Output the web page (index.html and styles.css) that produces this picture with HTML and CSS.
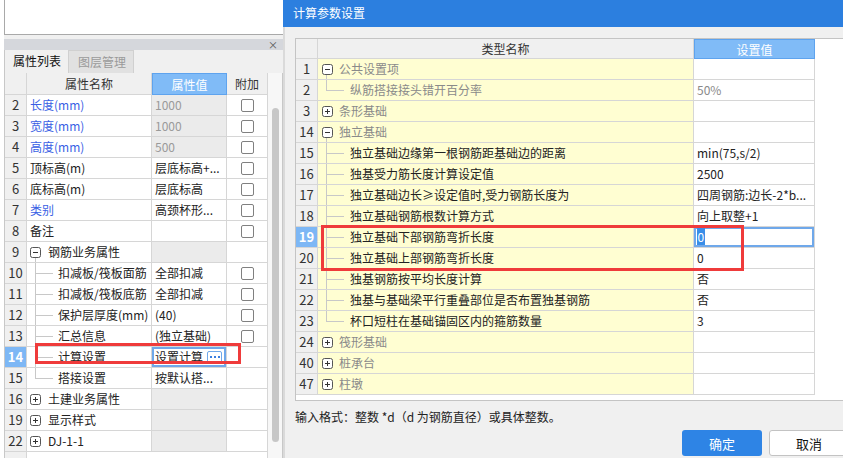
FILE: index.html
```html
<!DOCTYPE html>
<html lang="zh">
<head>
<meta charset="utf-8">
<title>计算参数设置</title>
<link rel="stylesheet" href="styles.css">
</head>
<body>
<div class="left">
  <div class="blank"></div>
  <div class="gap"></div>
  <div class="pbar"><span class="x">×</span></div>
  <div class="tabs"><div class="tab on">属性列表</div><div class="tab off">图层管理</div></div>
  <div class="pbody">
    <div class="ptable">
      <div class="prow head"><div class="c n"></div><div class="c nm h">属性名称</div><div class="c v hv">属性值</div><div class="c a h">附加</div></div>
      <div class="prow"><div class="c n">2</div><div class="c nm blue">长度(mm)</div><div class="c v ro">1000</div><div class="c a"><i class="cb"></i></div></div>
      <div class="prow"><div class="c n">3</div><div class="c nm blue">宽度(mm)</div><div class="c v ro">1000</div><div class="c a"><i class="cb"></i></div></div>
      <div class="prow"><div class="c n">4</div><div class="c nm blue">高度(mm)</div><div class="c v ro">500</div><div class="c a"><i class="cb"></i></div></div>
      <div class="prow"><div class="c n">5</div><div class="c nm">顶标高(m)</div><div class="c v">层底标高+...</div><div class="c a"><i class="cb"></i></div></div>
      <div class="prow"><div class="c n">6</div><div class="c nm">底标高(m)</div><div class="c v">层底标高</div><div class="c a"><i class="cb"></i></div></div>
      <div class="prow"><div class="c n">7</div><div class="c nm blue">类别</div><div class="c v">高颈杯形...</div><div class="c a"><i class="cb"></i></div></div>
      <div class="prow"><div class="c n">8</div><div class="c nm">备注</div><div class="c v"></div><div class="c a"><i class="cb"></i></div></div>
      <div class="prow"><div class="c n">9</div><div class="c nm par open"><svg class="tbox" width="11" height="11" viewBox="0 0 11 11"><rect x="0.5" y="0.5" width="10" height="10" rx="2" fill="#fff" stroke="#555"/><path d="M3 5.5h5" stroke="#333"/></svg>钢筋业务属性</div><div class="c v gr"></div><div class="c a"></div></div>
      <div class="prow"><div class="c n">10</div><div class="c nm ch">扣减板/筏板面筋</div><div class="c v">全部扣减</div><div class="c a"><i class="cb"></i></div></div>
      <div class="prow"><div class="c n">11</div><div class="c nm ch">扣减板/筏板底筋</div><div class="c v">全部扣减</div><div class="c a"><i class="cb"></i></div></div>
      <div class="prow"><div class="c n">12</div><div class="c nm ch">保护层厚度(mm)</div><div class="c v">(40)</div><div class="c a"><i class="cb"></i></div></div>
      <div class="prow"><div class="c n">13</div><div class="c nm ch">汇总信息</div><div class="c v">(独立基础)</div><div class="c a"><i class="cb"></i></div></div>
      <div class="prow"><div class="c n sel">14</div><div class="c nm ch">计算设置</div><div class="c v edit">设置计算<span class="more"><svg width="12" height="4" viewBox="0 0 12 4"><rect x="1" y="1" width="2" height="2" fill="#3b7fe0"/><rect x="5" y="1" width="2" height="2" fill="#3b7fe0"/><rect x="9" y="1" width="2" height="2" fill="#3b7fe0"/></svg></span></div><div class="c a"></div></div>
      <div class="prow"><div class="c n">15</div><div class="c nm ch last">搭接设置</div><div class="c v">按默认搭...</div><div class="c a"></div></div>
      <div class="prow"><div class="c n">16</div><div class="c nm par"><svg class="tbox" width="11" height="11" viewBox="0 0 11 11"><rect x="0.5" y="0.5" width="10" height="10" rx="2" fill="#fff" stroke="#555"/><path d="M3 5.5h5M5.5 3v5" stroke="#333"/></svg>土建业务属性</div><div class="c v gr"></div><div class="c a"></div></div>
      <div class="prow"><div class="c n">19</div><div class="c nm par"><svg class="tbox" width="11" height="11" viewBox="0 0 11 11"><rect x="0.5" y="0.5" width="10" height="10" rx="2" fill="#fff" stroke="#555"/><path d="M3 5.5h5M5.5 3v5" stroke="#333"/></svg>显示样式</div><div class="c v gr"></div><div class="c a"></div></div>
      <div class="prow"><div class="c n">22</div><div class="c nm par"><svg class="tbox" width="11" height="11" viewBox="0 0 11 11"><rect x="0.5" y="0.5" width="10" height="10" rx="2" fill="#fff" stroke="#555"/><path d="M3 5.5h5M5.5 3v5" stroke="#333"/></svg>DJ-1-1</div><div class="c v gr"></div><div class="c a"></div></div>
      <div class="pfill"></div>
    </div>
    <div class="vscroll"><div class="thumb"></div></div>
  </div>
  <div class="redbox lred"></div>
</div>

<div class="dlg">
  <div class="title">计算参数设置</div>
  <div class="dbody">
    <div class="dtable">
      <div class="drow head"><div class="c n"></div><div class="c dn h">类型名称</div><div class="c dv hv">设置值</div><div class="c rest"></div></div>
      <div class="drow"><div class="c n">1</div><div class="c dn par open grp"><svg class="tbox" width="11" height="11" viewBox="0 0 11 11"><rect x="0.5" y="0.5" width="10" height="10" rx="2" fill="#fff" stroke="#555"/><path d="M3 5.5h5" stroke="#333"/></svg>公共设置项</div><div class="c dv"></div><div class="c rest"></div></div>
      <div class="drow"><div class="c n">2</div><div class="c dn ch last grp">纵筋搭接接头错开百分率</div><div class="c dv muted">50%</div><div class="c rest"></div></div>
      <div class="drow"><div class="c n">3</div><div class="c dn par grp"><svg class="tbox" width="11" height="11" viewBox="0 0 11 11"><rect x="0.5" y="0.5" width="10" height="10" rx="2" fill="#fff" stroke="#555"/><path d="M3 5.5h5M5.5 3v5" stroke="#333"/></svg>条形基础</div><div class="c dv"></div><div class="c rest"></div></div>
      <div class="drow"><div class="c n">14</div><div class="c dn par open grp"><svg class="tbox" width="11" height="11" viewBox="0 0 11 11"><rect x="0.5" y="0.5" width="10" height="10" rx="2" fill="#fff" stroke="#555"/><path d="M3 5.5h5" stroke="#333"/></svg>独立基础</div><div class="c dv"></div><div class="c rest"></div></div>
      <div class="drow"><div class="c n">15</div><div class="c dn ch">独立基础边缘第一根钢筋距基础边的距离</div><div class="c dv">min(75,s/2)</div><div class="c rest"></div></div>
      <div class="drow"><div class="c n">16</div><div class="c dn ch">独基受力筋长度计算设定值</div><div class="c dv">2500</div><div class="c rest"></div></div>
      <div class="drow"><div class="c n">17</div><div class="c dn ch">独立基础边长≥设定值时,受力钢筋长度为</div><div class="c dv">四周钢筋:边长-2*b...</div><div class="c rest"></div></div>
      <div class="drow"><div class="c n">18</div><div class="c dn ch">独立基础钢筋根数计算方式</div><div class="c dv">向上取整+1</div><div class="c rest"></div></div>
      <div class="drow"><div class="c n sel">19</div><div class="c dn ch">独立基础下部钢筋弯折长度</div><div class="c dv edit"><span class="hl">0</span></div><div class="c rest"></div></div>
      <div class="drow"><div class="c n">20</div><div class="c dn ch">独立基础上部钢筋弯折长度</div><div class="c dv">0</div><div class="c rest"></div></div>
      <div class="drow"><div class="c n">21</div><div class="c dn ch">独基钢筋按平均长度计算</div><div class="c dv">否</div><div class="c rest"></div></div>
      <div class="drow"><div class="c n">22</div><div class="c dn ch">独基与基础梁平行重叠部位是否布置独基钢筋</div><div class="c dv">否</div><div class="c rest"></div></div>
      <div class="drow"><div class="c n">23</div><div class="c dn ch last">杯口短柱在基础锚固区内的箍筋数量</div><div class="c dv">3</div><div class="c rest"></div></div>
      <div class="drow"><div class="c n">24</div><div class="c dn par grp"><svg class="tbox" width="11" height="11" viewBox="0 0 11 11"><rect x="0.5" y="0.5" width="10" height="10" rx="2" fill="#fff" stroke="#555"/><path d="M3 5.5h5M5.5 3v5" stroke="#333"/></svg>筏形基础</div><div class="c dv"></div><div class="c rest"></div></div>
      <div class="drow"><div class="c n">40</div><div class="c dn par grp"><svg class="tbox" width="11" height="11" viewBox="0 0 11 11"><rect x="0.5" y="0.5" width="10" height="10" rx="2" fill="#fff" stroke="#555"/><path d="M3 5.5h5M5.5 3v5" stroke="#333"/></svg>桩承台</div><div class="c dv"></div><div class="c rest"></div></div>
      <div class="drow"><div class="c n">47</div><div class="c dn par grp"><svg class="tbox" width="11" height="11" viewBox="0 0 11 11"><rect x="0.5" y="0.5" width="10" height="10" rx="2" fill="#fff" stroke="#555"/><path d="M3 5.5h5M5.5 3v5" stroke="#333"/></svg>柱墩</div><div class="c dv"></div><div class="c rest"></div></div>
    </div>
    <div class="hint">输入格式：整数 *d（d 为钢筋直径）或具体整数。</div>
    <div class="btns"><button class="btn ok">确定</button><button class="btn cancel">取消</button></div>
  </div>
  <div class="redbox dred"></div>
</div>
</body>
</html>
```

FILE: styles.css
```css
* { box-sizing: border-box; }
html, body { margin: 0; padding: 0; }
body {
  width: 843px;
  height: 458px;
  overflow: hidden;
  display: flex;
  font-family: "Noto Sans CJK SC", "Noto Sans", sans-serif;
  font-size: 12px;
  color: #222;
  background: #fff;
}

/* ---------- left panel ---------- */
.left {
  width: 283px;
  flex: none;
  position: relative;
  padding-left: 4px;
  background: #fff;
  display: flex;
  flex-direction: column;
}
.blank {
  height: 35px;
  flex: none;
  background: #fff;
  border-left: 1px solid #a9a9a9;
  border-bottom: 1px solid #a9a9a9;
}
.gap { height: 4px; flex: none; background: #f0f0f0; }
.pbar {
  height: 11px;
  flex: none;
  background: #d5d7dc;
  display: flex;
  justify-content: flex-end;
  align-items: center;
  padding-right: 5px;
}
.pbar .x { font-size: 10px; line-height: 10px; color: #555; }
.tabs {
  height: 23px;
  flex: none;
  display: flex;
  background: #f0f0f0;
  border-left: 1px solid #c8c8c8;
}
.tab { line-height: 22px; }
.tab.on { width: 63px; padding-left: 8px; color: #111; }
.tab.off {
  width: 66px;
  padding-left: 9px;
  color: #9a9a9a;
  background: #e1e1e1;
  border: 1px solid #d0d0d0;
  border-bottom: none;
}
.pbody { flex: 1; display: flex; min-height: 0; }
.ptable {
  width: 264px;
  flex: none;
  border-left: 1px solid #c8c8c8;
  display: flex;
  flex-direction: column;
  background: #fff;
}
.prow {
  display: grid;
  grid-template-columns: 22px 125px 75px 41px;
  height: 21px;
  flex: none;
}
.prow.head { height: 22px; }
.c {
  border-right: 1px solid #d6d6d6;
  border-bottom: 1px solid #d6d6d6;
  padding-left: 3px;
  line-height: 20px;
  white-space: nowrap;
  overflow: hidden;
  position: relative;
}
.head .c { line-height: 21px; }
.c.n {
  background: #f0f0f0;
  text-align: center;
  padding-left: 0;
  font-size: 13px;
  color: #333;
}
.c.n.sel { background: #7db7f5; color: #fff; font-weight: bold; }
.c.h { background: #f0f0f0; text-align: center; padding-left: 0; color: #333; }
.c.hv {
  background: #80bbf7;
  color: #fff;
  text-align: center;
  padding-left: 0;
  border: 1px solid #5ea3ee;
}
.blue { color: #3a5fe4; }
.c.v.ro { background: #ebebeb; color: #9a9a9a; }
.c.v.gr { background: #ebebeb; }
.c.a { display: flex; align-items: center; justify-content: center; padding-left: 0; }
.cb {
  width: 13px;
  height: 13px;
  border: 1px solid #808080;
  border-radius: 2px;
  background: #fff;
  display: block;
}
.c.v.edit {
  box-shadow: inset 0 0 0 2px #6fa8ea;
  display: flex;
  align-items: center;
}
.more {
  margin-left: 4px;
  width: 15px;
  height: 13px;
  border: 1px solid #6fa8ea;
  border-radius: 2px;
  background: #fff;
  display: flex;
  align-items: center;
  justify-content: center;
}
.more svg { display: block; }

/* tree */
.tbox { position: absolute; left: 3px; top: 5px; display: block; }
.par { padding-left: 21px; }
.par.open::after {
  content: "";
  position: absolute;
  left: 8px;
  top: 16px;
  bottom: 0;
  width: 1px;
  background: #c8c8c8;
}
.ch { padding-left: 31px; }
.ch::before {
  content: "";
  position: absolute;
  left: 8px;
  top: 0;
  bottom: 0;
  width: 1px;
  background: #c8c8c8;
}
.ch.last::before { bottom: 10px; }
.ch::after {
  content: "";
  position: absolute;
  left: 8px;
  top: 10px;
  width: 18px;
  height: 1px;
  background: #c8c8c8;
}
.pfill {
  flex: 1;
  background: linear-gradient(to right, #f0f0f0 21px, #d6d6d6 21px, #d6d6d6 22px, #fff 22px);
  border-right: 1px solid #d6d6d6;
}
.vscroll {
  flex: 1;
  background: #f7f7f7;
  border-right: 1px solid #c8c8c8;
  padding: 35px 0 0 4px;
}
.thumb {
  width: 7px;
  height: 334px;
  border-radius: 4px;
  background: #c7c7c7;
}

/* ---------- dialog ---------- */
.dlg {
  flex: 1;
  display: flex;
  flex-direction: column;
  background: #f0f0f0;
  position: relative;
  min-width: 0;
  overflow: hidden;
}
.title {
  height: 27px;
  flex: none;
  background: #2c7fdf;
  color: #fff;
  line-height: 26px;
  padding-left: 10px;
}
.dbody {
  flex: 1;
  border-left: 2px solid #dadada;
  padding: 11px 0 0 10px;
}
.dtable {
  background: #fff;
  border-top: 1px solid #c4c4c4;
  border-left: 1px solid #c4c4c4;
  border-bottom: 1px solid #c4c4c4;
  padding-bottom: 5px;
}
.drow {
  display: grid;
  grid-template-columns: 22px 376px 121px 1fr;
  height: 21px;
}
.drow.head { height: 20px; }
.drow.head .c { line-height: 19px; }
.c.rest { border: none; }
.c.dn { background: #fffed2; }
.c.dn.h { background: #f0f0f0; }
.c.dn.par { padding-left: 21px; }
.c.dn.ch { padding-left: 32px; }
.c.dn .tbox { left: 4px; }
.grp { color: #8a8a8a; }
.muted { color: #8a8a8a; }
.c.dv.edit { box-shadow: inset 0 0 0 2px #6fa8ea; }
.hl { background: #3a8ee8; color: #fff; padding: 0 0.5px; }
.hint {
  margin-top: 7px;
  line-height: 17px;
  color: #222;
}
.btns {
  display: flex;
  gap: 7px;
  padding-left: 387px;
  margin-top: 5px;
}
.btn {
  flex: none;
  width: 80px;
  height: 26px;
  border-radius: 3px;
  font-family: inherit;
  font-size: 13px;
  padding: 0;
}
.btn.ok { background: #2e84e5; color: #fff; border: none; }
.btn.cancel { background: #fff; color: #111; border: 1px solid #c3c3c3; }

/* annotations */
.redbox {
  position: absolute;
  border: 3px solid #ef3b3b;
  pointer-events: none;
}
.lred { left: 35px; top: 343px; width: 206px; height: 21px; }
.dred { left: 38px; top: 225px; width: 423px; height: 46px; }
```
